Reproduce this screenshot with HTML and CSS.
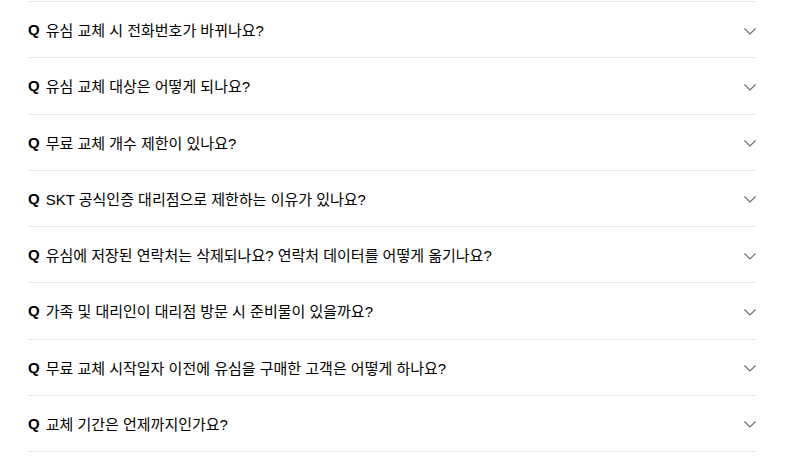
FILE: index.html
```html
<!DOCTYPE html>
<html lang="ko">
<head>
<meta charset="utf-8">
<link rel="stylesheet" href="styles.css">
</head>
<body>
<ul class="faq">
  <li class="item"><span class="q">Q</span><span class="text">유심 교체 시 전화번호가 바뀌나요?</span><svg class="chev" viewBox="0 0 12 7" width="12" height="7"><path d="M0.5 0.5 L6 6 L11.5 0.5" fill="none" stroke="#6a6a6a" stroke-width="1.1"/></svg></li>
  <li class="item"><span class="q">Q</span><span class="text">유심 교체 대상은 어떻게 되나요?</span><svg class="chev" viewBox="0 0 12 7" width="12" height="7"><path d="M0.5 0.5 L6 6 L11.5 0.5" fill="none" stroke="#6a6a6a" stroke-width="1.1"/></svg></li>
  <li class="item"><span class="q">Q</span><span class="text">무료 교체 개수 제한이 있나요?</span><svg class="chev" viewBox="0 0 12 7" width="12" height="7"><path d="M0.5 0.5 L6 6 L11.5 0.5" fill="none" stroke="#6a6a6a" stroke-width="1.1"/></svg></li>
  <li class="item"><span class="q">Q</span><span class="text">SKT 공식인증 대리점으로 제한하는 이유가 있나요?</span><svg class="chev" viewBox="0 0 12 7" width="12" height="7"><path d="M0.5 0.5 L6 6 L11.5 0.5" fill="none" stroke="#6a6a6a" stroke-width="1.1"/></svg></li>
  <li class="item"><span class="q">Q</span><span class="text">유심에 저장된 연락처는 삭제되나요? 연락처 데이터를 어떻게 옮기나요?</span><svg class="chev" viewBox="0 0 12 7" width="12" height="7"><path d="M0.5 0.5 L6 6 L11.5 0.5" fill="none" stroke="#6a6a6a" stroke-width="1.1"/></svg></li>
  <li class="item"><span class="q">Q</span><span class="text">가족 및 대리인이 대리점 방문 시 준비물이 있을까요?</span><svg class="chev" viewBox="0 0 12 7" width="12" height="7"><path d="M0.5 0.5 L6 6 L11.5 0.5" fill="none" stroke="#6a6a6a" stroke-width="1.1"/></svg></li>
  <li class="item"><span class="q">Q</span><span class="text">무료 교체 시작일자 이전에 유심을 구매한 고객은 어떻게 하나요?</span><svg class="chev" viewBox="0 0 12 7" width="12" height="7"><path d="M0.5 0.5 L6 6 L11.5 0.5" fill="none" stroke="#6a6a6a" stroke-width="1.1"/></svg></li>
  <li class="item"><span class="q">Q</span><span class="text">교체 기간은 언제까지인가요?</span><svg class="chev" viewBox="0 0 12 7" width="12" height="7"><path d="M0.5 0.5 L6 6 L11.5 0.5" fill="none" stroke="#6a6a6a" stroke-width="1.1"/></svg></li>
</ul>
</body>
</html>
```
FILE: styles.css
```css
html, body {
  margin: 0;
  padding: 0;
  background: #fff;
}
body {
  font-family: "Liberation Sans", "Noto Sans CJK KR", sans-serif;
  color: #000;
}
.faq {
  list-style: none;
  margin: 1px 0 0 28px;
  padding: 0;
  width: 728px;
  border-top: 1px solid #e6e6e6;
}
.item {
  box-sizing: border-box;
  height: 56.25px;
  border-bottom: 1px solid #e6e6e6;
  display: flex;
  align-items: center;
  font-size: 15px;
}
.q {
  font-weight: bold;
  margin-right: 6px;
}
.text {
  flex: 1;
}
.chev {
  margin-top: 3px;
  flex: none;
}
```
